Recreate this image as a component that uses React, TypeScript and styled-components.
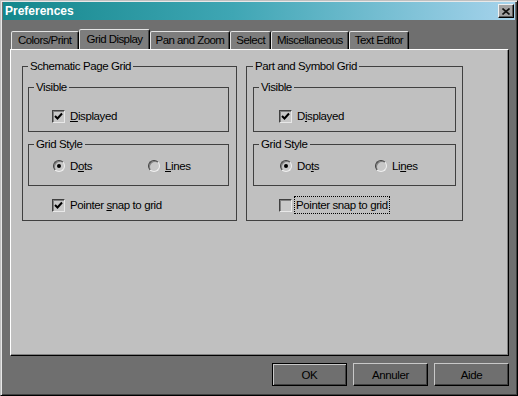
import { createGlobalStyle, styled } from "styled-components";

const GlobalStyle = createGlobalStyle`
  html, body {
    margin: 0;
    padding: 0;
    background: #6f6f6f;
  }
  body {
    font-family: "Liberation Sans", Arial, sans-serif;
    font-size: 11.5px;
    letter-spacing: -0.4px;
    color: #000;
  }
`;

type Column = {
  title: string;
  indent: number;
  displayed: { key: string; before: string; after: string };
  dots: { key: string; before: string; after: string };
  lines: { key: string; before: string; after: string };
  snapChecked: boolean;
  snapFocused: boolean;
  width: number;
  padRight: number;
  padLeft: number;
};

const columns: Column[] = [
  {
    title: "Schematic Page Grid",
    indent: 24,
    displayed: { before: "", key: "D", after: "isplayed" },
    dots: { before: "D", key: "o", after: "ts" },
    lines: { before: "", key: "L", after: "ines" },
    snapChecked: true,
    snapFocused: false,
    width: 215,
    padLeft: 5,
    padRight: 7,
  },
  {
    title: "Part and Symbol Grid",
    indent: 26,
    displayed: { before: "D", key: "i", after: "splayed" },
    dots: { before: "Do", key: "t", after: "s" },
    lines: { before: "Li", key: "n", after: "es" },
    snapChecked: false,
    snapFocused: true,
    width: 217,
    padLeft: 6,
    padRight: 6,
  },
];

const tabs = ["Colors/Print", "Grid Display", "Pan and Zoom", "Select", "Miscellaneous", "Text Editor"];

const Check = () => (
  <svg width="9" height="9" viewBox="0 0 9 9">
    <polyline points="1,4 3.5,6.5 8,1.5" fill="none" stroke="#000" strokeWidth="2" />
  </svg>
);

const Label = ({ before, keyChar, after }: { before: string; keyChar: string; after: string }) => (
  <>
    {before}
    <Key>{keyChar}</Key>
    {after}
  </>
);

const App = (): JSX.Element => {
  return (
    <>
      <GlobalStyle />
      <Dialog>
        <TitleBar>
          <TitleText>Preferences</TitleText>
          <CloseButton>
            <svg width="8" height="7" viewBox="0 0 8 7">
              <path d="M0.5 0.5 L7.5 6.5 M7.5 0.5 L0.5 6.5" stroke="#111" strokeWidth="1.6" />
            </svg>
          </CloseButton>
        </TitleBar>

        <Body>
          <TabRow>
            {tabs.map((t) => (
              <Tab key={t} $active={t === "Grid Display"}>
                {t}
              </Tab>
            ))}
          </TabRow>
          <Panel>
            <Groups>
              {columns.map((c) => (
                <Group key={c.title} $width={c.width} $padLeft={c.padLeft} $padRight={c.padRight}>
                  <Legend>{c.title}</Legend>
                  <InnerGroup $top={15} $bottom={8}>
                    <Legend>Visible</Legend>
                    <Option $indent={c.indent - 6}>
                      <CheckBox>
                        <Check />
                      </CheckBox>
                      <OptionText>
                        <Label before={c.displayed.before} keyChar={c.displayed.key} after={c.displayed.after} />
                      </OptionText>
                    </Option>
                  </InnerGroup>
                  <InnerGroup $top={8} $bottom={12} $gap={5}>
                    <Legend>Grid Style</Legend>
                    <RadioRow $indent={c.indent - 5}>
                      <Option $indent={0}>
                        <Radio $checked />
                        <OptionText>
                          <Label before={c.dots.before} keyChar={c.dots.key} after={c.dots.after} />
                        </OptionText>
                      </Option>
                      <Option $indent={0}>
                        <Radio $checked={false} />
                        <OptionText>
                          <Label before={c.lines.before} keyChar={c.lines.key} after={c.lines.after} />
                        </OptionText>
                      </Option>
                    </RadioRow>
                  </InnerGroup>
                  <SnapRow $indent={c.indent}>
                    <CheckBox>{c.snapChecked && <Check />}</CheckBox>
                    {c.snapFocused ? (
                      <FocusText>Pointer snap to grid</FocusText>
                    ) : (
                      <OptionText>
                        Pointer <Key>s</Key>nap to grid
                      </OptionText>
                    )}
                  </SnapRow>
                </Group>
              ))}
            </Groups>
          </Panel>
        </Body>

        <ButtonRow>
          <Button $default>OK</Button>
          <Button>Annuler</Button>
          <Button>Aide</Button>
        </ButtonRow>
      </Dialog>
    </>
  );
};

export default App;

const Dialog = styled.div`
  width: 518px;
  height: 396px;
  box-sizing: border-box;
  background: #6f6f6f;
  border: 1px solid;
  border-color: #c0c0c0 #000 #000 #c0c0c0;
  box-shadow: inset 1px 1px #e8e8e8, inset -1px -1px #404040;
  padding: 1px 2px 2px;
  display: flex;
  flex-direction: column;
`;

const TitleBar = styled.div`
  height: 18px;
  display: flex;
  align-items: center;
  justify-content: space-between;
  padding: 0 1px 0 2px;
  background: linear-gradient(to right, #14878c 0%, #3fa6b4 45%, #a6d3ec 100%);
`;

const TitleText = styled.span`
  font-weight: 700;
  font-size: 12px;
  letter-spacing: 0;
  color: #fff;
`;

const CloseButton = styled.div`
  width: 16px;
  height: 14px;
  box-sizing: border-box;
  display: flex;
  align-items: center;
  justify-content: center;
  background: #a2a2a2;
  border: 1px solid;
  border-color: #f0f0f0 #000 #000 #f0f0f0;
  box-shadow: inset -1px -1px #5a5a5a;
`;

const Body = styled.div`
  margin: 9px 0 0 7px;
  width: 499px;
  display: flex;
  flex-direction: column;
`;

const TabRow = styled.div`
  height: 20px;
  display: flex;
  align-items: flex-end;
  padding-left: 1px;
`;

const Tab = styled.div<{ $active: boolean }>`
  height: ${(p) => (p.$active ? 20 : 18)}px;
  box-sizing: border-box;
  padding: 0 ${(p) => (p.$active ? 6 : 5)}px 1px;
  display: flex;
  align-items: center;
  background: #7d7d7d;
  border: 1px solid;
  border-bottom: none;
  border-color: #e4e4e4 #000 transparent #e4e4e4;
  border-radius: 2px 2px 0 0;
  box-shadow: inset -1px 0 #454545;
  letter-spacing: -0.55px;
  white-space: nowrap;

  &:first-child {
    padding: 0 7px 1px 6px;
  }
`;

const Panel = styled.div`
  height: 307px;
  box-sizing: border-box;
  background: #c0c0c0;
  border: 1px solid;
  border-color: #fff #000 #000 #fff;
  box-shadow: inset -1px -1px #808080;
  padding: 9px 0 0 11px;
`;

const Groups = styled.div`
  display: flex;
  gap: 9px;
`;

const Group = styled.fieldset<{ $width: number; $padLeft: number; $padRight: number }>`
  width: ${(p) => p.$width}px;
  box-sizing: border-box;
  margin: 0;
  min-width: 0;
  padding: 7px ${(p) => p.$padRight}px 8px ${(p) => p.$padLeft}px;
  border: 1px solid #404040;
`;

const InnerGroup = styled.fieldset<{ $top: number; $bottom: number; $gap?: number }>`
  margin: ${(p) => p.$gap ?? 0}px 0 0;
  min-width: 0;
  padding: ${(p) => p.$top}px 0 ${(p) => p.$bottom}px 5px;
  border: 1px solid #404040;
`;

const Legend = styled.legend`
  padding: 0 2px;
  line-height: 14px;
`;

const Option = styled.div<{ $indent: number }>`
  height: 14px;
  display: flex;
  align-items: center;
  gap: 5px;
  margin-left: ${(p) => p.$indent}px;
`;

const RadioRow = styled.div<{ $indent: number }>`
  display: grid;
  grid-template-columns: 95px auto;
  margin-left: ${(p) => p.$indent}px;
`;

const SnapRow = styled.div<{ $indent: number }>`
  height: 14px;
  margin: 12px 0 0 ${(p) => p.$indent}px;
  display: flex;
  align-items: center;
  gap: 5px;
`;

const OptionText = styled.span`
  line-height: 14px;
  white-space: nowrap;
`;

const FocusText = styled.span`
  line-height: 14px;
  padding: 1px 1px;
  margin-left: -2px;
  outline: 1px dotted #000;
  white-space: nowrap;
`;

const Key = styled.span`
  text-decoration: underline;
`;

const CheckBox = styled.span`
  width: 13px;
  height: 13px;
  flex: none;
  box-sizing: border-box;
  display: flex;
  align-items: center;
  justify-content: center;
  background: #c8c8c8;
  border: 1px solid;
  border-color: #404040 #e8e8e8 #e8e8e8 #404040;
  box-shadow: inset 1px 1px #808080;
`;

const Radio = styled.span<{ $checked: boolean }>`
  width: 12px;
  height: 12px;
  flex: none;
  box-sizing: border-box;
  border-radius: 50%;
  border: 1px solid;
  border-color: #404040 #f0f0f0 #f0f0f0 #404040;
  box-shadow: inset 1px 1px #808080;
  background: #c8c8c8;
  display: flex;
  align-items: center;
  justify-content: center;

  &::after {
    content: "";
    width: 4px;
    height: 4px;
    border-radius: 50%;
    background: ${(p) => (p.$checked ? "#000" : "transparent")};
  }
`;

const ButtonRow = styled.div`
  margin-top: 7px;
  padding-right: 6px;
  display: flex;
  justify-content: flex-end;
  gap: 6px;
`;

const Button = styled.div<{ $default?: boolean }>`
  width: 75px;
  height: 23px;
  box-sizing: border-box;
  display: flex;
  align-items: center;
  justify-content: center;
  background: #6f6f6f;
  border: 1px solid;
  border-color: ${(p) => (p.$default ? "#000" : "#c8c8c8 #000 #000 #c8c8c8")};
  box-shadow: ${(p) =>
    p.$default ? "inset 1px 1px #c8c8c8, inset -1px -1px #404040" : "inset -1px -1px #404040"};
`;
